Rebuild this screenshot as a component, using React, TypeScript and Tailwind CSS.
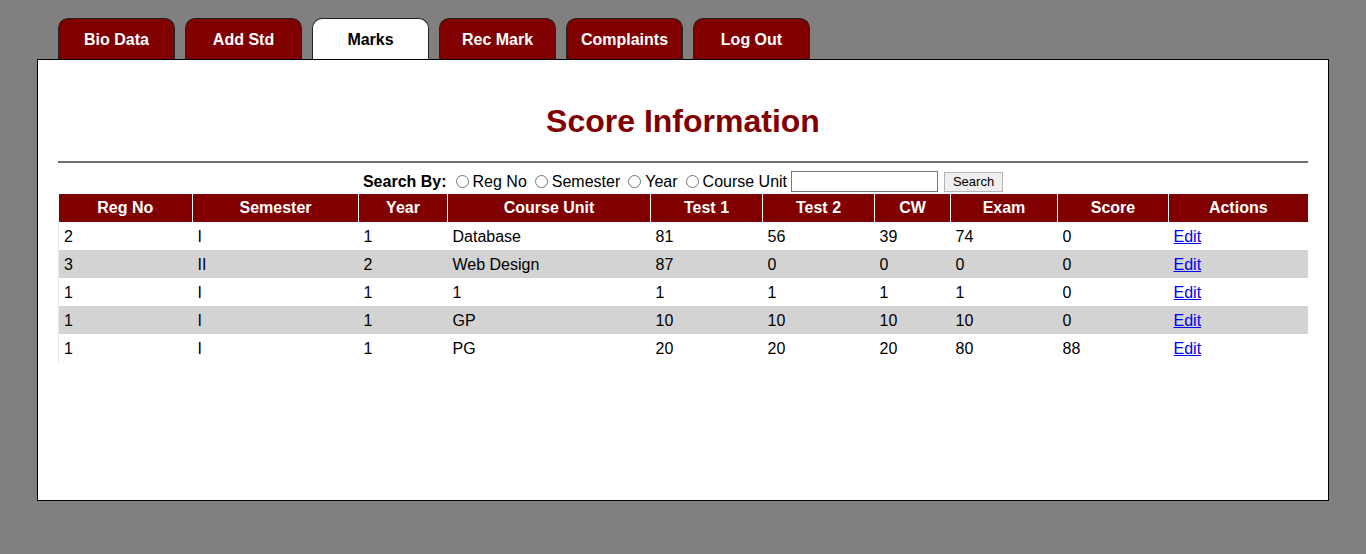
import React from "react";

const tabs = ["Bio Data", "Add Std", "Marks", "Rec Mark", "Complaints", "Log Out"];

const cols = [
  { name: "Reg No", w: 134 },
  { name: "Semester", w: 166 },
  { name: "Year", w: 89 },
  { name: "Course Unit", w: 203 },
  { name: "Test 1", w: 112 },
  { name: "Test 2", w: 112 },
  { name: "CW", w: 76 },
  { name: "Exam", w: 107 },
  { name: "Score", w: 111 },
  { name: "Actions", w: 139 },
];

const rows = [
  ["2", "I", "1", "Database", "81", "56", "39", "74", "0"],
  ["3", "II", "2", "Web Design", "87", "0", "0", "0", "0"],
  ["1", "I", "1", "1", "1", "1", "1", "1", "0"],
  ["1", "I", "1", "GP", "10", "10", "10", "10", "0"],
  ["1", "I", "1", "PG", "20", "20", "20", "80", "88"],
];

export default function App() {
  return (
    <div className="min-h-[554px] bg-[#808080] pt-[18px] font-['Liberation_Sans',Arial,sans-serif] text-black">
      <div className="ml-[58px] flex gap-[10px]">
        {tabs.map((t) => (
          <div
            key={t}
            className={
              "flex h-[41px] w-[117px] items-center justify-center rounded-t-[10px] border border-b-0 border-[#222] pt-[2px] text-[16px] font-bold " +
              (t === "Marks" ? "bg-white text-black" : "bg-[#800000] text-white")
            }
          >
            {t}
          </div>
        ))}
      </div>
      <div className="mx-[37px] h-[442px] border border-black bg-white px-[20px] pt-[43px]">
        <h1 className="text-center text-[32px] font-bold leading-[37px] text-[#800000]">Score Information</h1>
        <div className="mt-[21px] h-[2px] bg-[#6e6e6e]" />
        <div className="mt-[7px] flex h-[23px] items-center justify-center text-[16px]">
          <span className="mr-[9px] font-bold">Search By:</span>
          {["Reg No", "Semester", "Year", "Course Unit"].map((r, i) => (
            <label key={r} className={"flex items-center " + (i === 3 ? "mr-[4px]" : "mr-[8px]")}>
              <input type="radio" name="by" className="m-0 mr-[4px] h-[13px] w-[13px]" />
              {r}
            </label>
          ))}
          <input type="text" className="h-[21px] w-[147px] border border-[#767676] bg-white" />
          <button className="ml-[6px] h-[20px] w-[59px] border border-[#b5b5b5] bg-[#efefef] text-[13px] leading-none">
            Search
          </button>
        </div>
        <table className="mt-[1px] w-[1249px] table-fixed border-collapse text-[16px]">
          <colgroup>
            {cols.map((c) => (
              <col key={c.name} style={{ width: c.w }} />
            ))}
          </colgroup>
          <thead>
            <tr className="h-[28px] bg-[#800000] text-white">
              {cols.map((c, i) => (
                <th
                  key={c.name}
                  className={"p-0 text-center font-bold " + (i < cols.length - 1 ? "border-r border-white" : "")}
                >
                  {c.name}
                </th>
              ))}
            </tr>
          </thead>
          <tbody>
            {rows.map((r, i) => (
              <tr key={i} className={"h-[28px] " + (i % 2 === 1 ? "bg-[#d3d3d3]" : "bg-white")}>
                {r.map((v, j) => (
                  <td key={j} className={"pb-0 pl-[5px] pt-[2px] " + (j === 0 ? "border-l border-[#e6e6e6]" : "")}>
                    {v}
                  </td>
                ))}
                <td className="pb-0 pl-[5px] pt-[2px]">
                  <a href="#" className="text-[#0000ee] underline">
                    Edit
                  </a>
                </td>
              </tr>
            ))}
          </tbody>
        </table>
      </div>
    </div>
  );
}
